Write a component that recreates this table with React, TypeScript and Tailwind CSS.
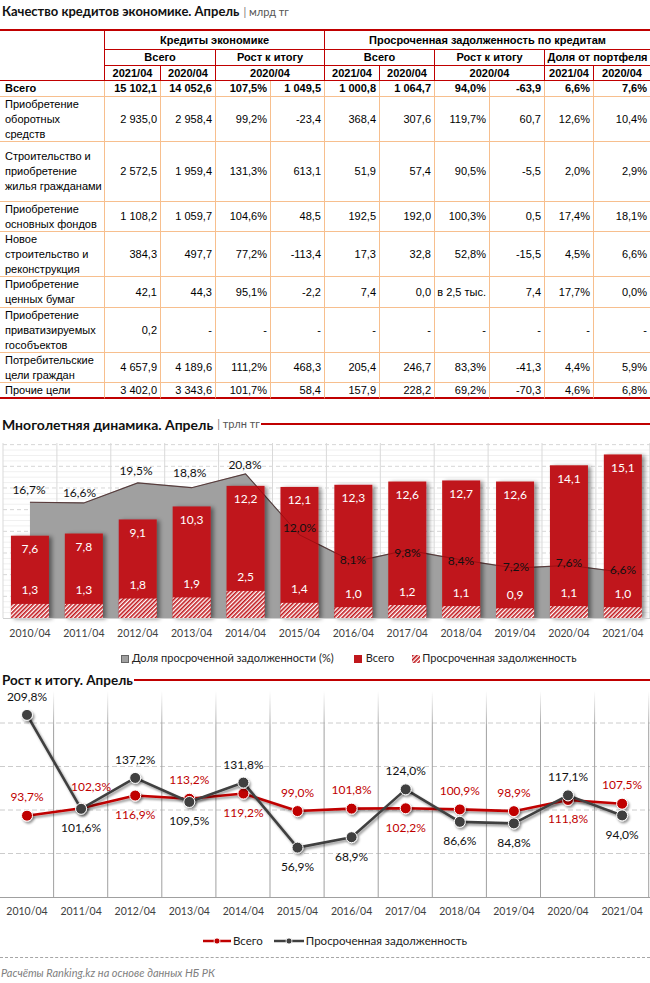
import React from "react";

const RED = "#c00000";

const years = ["2010/04","2011/04","2012/04","2013/04","2014/04","2015/04","2016/04","2017/04","2018/04","2019/04","2020/04","2021/04"];
const total = [7.6,7.8,9.1,10.3,12.2,12.1,12.3,12.6,12.7,12.6,14.1,15.1];
const overdue = [1.3,1.3,1.8,1.9,2.5,1.4,1.0,1.2,1.1,0.9,1.1,1.0];
const share = [16.7,16.6,19.5,18.8,20.8,12.0,8.1,9.8,8.4,7.2,7.6,6.6];
const shareLbl: [number, number][] = [[29,489],[79.5,492.3],[136,470.7],[189.7,472],[245,464],[299.5,527.3],[353,559.3],[407.5,552.7],[461,560],[516,566.7],[569,562.7],[623,569.3]];

const gr = [93.7,102.3,116.9,113.2,119.2,99.0,101.8,102.2,100.9,98.9,111.8,107.5];
const grPos = ["a","a","b","a","b","a","a","b","a","a","b","a"];
const od = [209.8,101.6,137.2,109.5,131.8,56.9,68.9,124.0,86.6,84.8,117.1,94.0];
const odPos = ["a","b","a","b","a","b","b","a","b","b","a","b"];

const fmt = (v: number) => v.toFixed(1).replace(".", ",");

type Row = { label: string[]; bold?: boolean; v: string[] };
const rows: Row[] = [
  { label: ["Всего"], bold: true, v: ["15 102,1","14 052,6","107,5%","1 049,5","1 000,8","1 064,7","94,0%","-63,9","6,6%","7,6%"] },
  { label: ["Приобретение","оборотных","средств"], v: ["2 935,0","2 958,4","99,2%","-23,4","368,4","307,6","119,7%","60,7","12,6%","10,4%"] },
  { label: ["Строительство и","приобретение","жилья гражданами"], v: ["2 572,5","1 959,4","131,3%","613,1","51,9","57,4","90,5%","-5,5","2,0%","2,9%"] },
  { label: ["Приобретение","основных фондов"], v: ["1 108,2","1 059,7","104,6%","48,5","192,5","192,0","100,3%","0,5","17,4%","18,1%"] },
  { label: ["Новое","строительство и","реконструкция"], v: ["384,3","497,7","77,2%","-113,4","17,3","32,8","52,8%","-15,5","4,5%","6,6%"] },
  { label: ["Приобретение","ценных бумаг"], v: ["42,1","44,3","95,1%","-2,2","7,4","0,0","в 2,5 тыс.","7,4","17,7%","0,0%"] },
  { label: ["Приобретение","приватизируемых","гособъектов"], v: ["0,2","-","-","-","-","-","-","-","-","-"] },
  { label: ["Потребительские","цели граждан"], v: ["4 657,9","4 189,6","111,2%","468,3","205,4","246,7","83,3%","-41,3","4,4%","5,9%"] },
  { label: ["Прочие цели"], v: ["3 402,0","3 343,6","101,7%","58,4","157,9","228,2","69,2%","-70,3","4,6%","6,8%"] },
];

function H({ children, cls = "" }: { children?: React.ReactNode; cls?: string }) {
  return (
    <div className={"flex items-center justify-center border-b border-r border-[#c00000] font-bold leading-none " + cls}>
      {children}
    </div>
  );
}

function Table() {
  return (
    <div className="border-t-2 border-[#c00000] font-['Liberation_Sans',Arial,sans-serif] text-[11px] text-black">
      <div className="grid grid-cols-[105px_56px_55px_55px_54px_55px_55px_55px_55px_49px_56px] grid-rows-[19px_16px_15px_16px_45px_60px_30px_45px_31px_45px_30px_16px]">
        <div className="row-span-3 border-b border-r border-[#c00000]" />
        <H cls="col-span-4">Кредиты экономике</H>
        <H cls="col-span-6 border-r-0">Просроченная задолженность по кредитам</H>
        <H cls="col-span-2">Всего</H>
        <H cls="col-span-2">Рост к итогу</H>
        <H cls="col-span-2">Всего</H>
        <H cls="col-span-2">Рост к итогу</H>
        <H cls="col-span-2 border-r-0">Доля от портфеля</H>
        <H>2021/04</H>
        <H>2020/04</H>
        <H cls="col-span-2">2020/04</H>
        <H>2021/04</H>
        <H>2020/04</H>
        <H cls="col-span-2">2020/04</H>
        <H>2021/04</H>
        <H cls="border-r-0">2020/04</H>
        {rows.map((r, ri) => {
          const last = ri === rows.length - 1;
          const bb = last ? "border-b-2 border-b-[#c00000]" : "border-b border-b-[#f7bf8e]";
          return (
            <React.Fragment key={ri}>
              <div className={"flex flex-col justify-center pl-[5px] leading-[15px] border-r border-r-[#f7bf8e] " + bb + (r.bold ? " font-bold" : "")}>
                {r.label.map((l, i) => (
                  <div key={i} className="whitespace-nowrap">{l}</div>
                ))}
              </div>
              {r.v.map((v, i) => (
                <div
                  key={i}
                  className={"flex items-center justify-end pr-[3px] leading-[15px] whitespace-nowrap " + bb + (i < 9 ? " border-r border-r-[#f7bf8e]" : "") + (r.bold ? " font-bold" : "")}
                >
                  {v}
                </div>
              ))}
            </React.Fragment>
          );
        })}
      </div>
    </div>
  );
}

function Chart1() {
  const yb = 181;
  const ux = 10.83;
  const up = 6.93;
  const cx = (i: number) => 29.95 + 53.9 * i;
  const pts = share.map((p, i) => [cx(i), yb - p * up]);
  const areaD =
    `M${cx(0)},${yb} ` + pts.map((p) => `L${p[0]},${p[1]}`).join(" ") + ` L${cx(11)},${yb} Z`;
  const lineD = pts.map((p, i) => `${i ? "L" : "M"}${p[0]},${p[1]}`).join(" ");
  const minors: number[] = [];
  for (let m = 1; m <= 32; m++) if (m % 4) minors.push(yb - m * 5.4175);
  return (
    <svg width={650} height={208} className="block">
      <defs>
        <pattern id="hatch" width="3" height="3" patternUnits="userSpaceOnUse" patternTransform="rotate(45)">
          <rect width="3" height="3" fill="#ffffff" />
          <rect width="1.6" height="3" fill="#c0171c" />
        </pattern>
        <filter id="bs" x="-20%" y="-10%" width="150%" height="120%">
          <feDropShadow dx="3" dy="1" stdDeviation="2" floodColor="#000" floodOpacity="0.45" />
        </filter>
      </defs>
      {minors.map((y, i) => (
        <line key={i} x1={3} x2={650} y1={y} y2={y} stroke="#f0f0f0" strokeWidth={1} />
      ))}
      {[1,2,3,4,5,6,7,8].map((k) => (
        <line key={k} x1={3} x2={650} y1={yb - k * 21.67} y2={yb - k * 21.67} stroke="#d6d6d6" strokeDasharray="4 3" strokeWidth={1} />
      ))}
      {Array.from({ length: 13 }).map((_, i) => (
        <line key={i} x1={3 + 53.9 * i} x2={3 + 53.9 * i} y1={6} y2={yb} stroke="#d9d9d9" strokeWidth={1} />
      ))}
      <path d={areaD} fill="#a0a0a0" />
      <path d={lineD} fill="none" stroke="#5a5a5a" strokeWidth={1.2} />
      {total.map((v, i) => (
        <rect key={i} x={cx(i) - 19} y={yb - v * ux} width={38} height={v * ux} fill="#c0171c" filter="url(#bs)" />
      ))}
      {overdue.map((v, i) => (
        <rect key={i} x={cx(i) - 19} y={yb - v * ux} width={38} height={v * ux} fill="url(#hatch)" />
      ))}
      <path d={lineD} fill="none" stroke="#5a0000" strokeOpacity={0.35} strokeWidth={1} />
      <line x1={3} x2={650} y1={yb + 0.5} y2={yb + 0.5} stroke="#d0d0d0" />
      {total.map((v, i) => (
        <text key={i} x={cx(i)} y={yb - v * ux + 13} fill="#fff" fontSize={12} textAnchor="middle" dominantBaseline="central">
          {fmt(v)}
        </text>
      ))}
      {overdue.map((v, i) => (
        <text key={i} x={cx(i)} y={yb - v * ux - 14} fill="#fff" fontSize={12} textAnchor="middle" dominantBaseline="central">
          {fmt(v)}
        </text>
      ))}
      {share.map((v, i) => (
        <text key={i} x={shareLbl[i][0]} y={shareLbl[i][1] - 437} fill="#111" fontSize={12} textAnchor="middle" dominantBaseline="central">
          {fmt(v)}%
        </text>
      ))}
      {years.map((y, i) => (
        <text key={i} x={cx(i)} y={196} fill="#404040" fontSize={10.5} textAnchor="middle" dominantBaseline="central">
          {y}
        </text>
      ))}
    </svg>
  );
}

function Chart2() {
  const yb = 209;
  const s = 0.868;
  const cx = (i: number) => 27 + 54.1 * i;
  const Y = (v: number) => yb - v * s;
  const grD = gr.map((v, i) => `${i ? "L" : "M"}${cx(i)},${Y(v)}`).join(" ");
  const odD = od.map((v, i) => `${i ? "L" : "M"}${cx(i)},${Y(v)}`).join(" ");
  return (
    <svg width={650} height={237} className="block">
      <defs>
        <linearGradient id="vfade" gradientUnits="userSpaceOnUse" x1="0" y1="3" x2="0" y2="40">
          <stop offset="0" stopColor="#a0a0a0" stopOpacity="0" />
          <stop offset="1" stopColor="#a0a0a0" stopOpacity="1" />
        </linearGradient>
        <filter id="ms" x="-50%" y="-50%" width="200%" height="200%">
          <feDropShadow dx="1.5" dy="2" stdDeviation="1.2" floodColor="#000" floodOpacity="0.4" />
        </filter>
      </defs>
      {[35, 78.5, 122, 165.5].map((y) => (
        <line key={y} x1={0} x2={650} y1={y} y2={y} stroke="#cccccc" strokeDasharray="5 3" strokeWidth={1} />
      ))}
      {Array.from({ length: 12 }).map((_, i) => (
        <rect key={i} x={53.6 + 54.1 * i - 0.5} y={3} width={1} height={yb - 3} fill="url(#vfade)" />
      ))}
      <line x1={0} x2={650} y1={yb + 0.5} y2={yb + 0.5} stroke="#a0a0a0" />
      <path d={grD} fill="none" stroke={RED} strokeWidth={2.6} filter="url(#ms)" strokeLinejoin="round" />
      {gr.map((v, i) => (
        <circle key={i} cx={cx(i)} cy={Y(v)} r={5.5} fill={RED} stroke="#fff" strokeWidth={1} filter="url(#ms)" />
      ))}
      <path d={odD} fill="none" stroke="#404040" strokeWidth={2.6} filter="url(#ms)" strokeLinejoin="round" />
      {od.map((v, i) => (
        <circle key={i} cx={cx(i)} cy={Y(v)} r={5.5} fill="#404040" stroke="#fff" strokeWidth={1} filter="url(#ms)" />
      ))}
      {gr.map((v, i) => {
        const above = grPos[i] === "a";
        const dx = i === 1 ? 10 : 0;
        const dy = i === 1 ? -22 : above ? -19 : 19;
        return (
          <text key={i} x={cx(i) + dx} y={Y(v) + dy} fill={RED} fontSize={12} textAnchor="middle" dominantBaseline="central">
            {fmt(v)}%
          </text>
        );
      })}
      {od.map((v, i) => {
        const above = odPos[i] === "a";
        return (
          <text key={i} x={cx(i)} y={Y(v) + (above ? -18.5 : 19)} fill="#111" fontSize={12} textAnchor="middle" dominantBaseline="central">
            {fmt(v)}%
          </text>
        );
      })}
      {years.map((y, i) => (
        <text key={i} x={cx(i)} y={223} fill="#404040" fontSize={10.5} textAnchor="middle" dominantBaseline="central">
          {y}
        </text>
      ))}
    </svg>
  );
}

function Title({ text, unit, line, size = "text-[13px]" }: { text: string; unit?: string; line?: boolean; size?: string }) {
  return (
    <div className="flex items-center h-[16px]">
      <span className={"font-bold text-[#111] pl-[2px] whitespace-nowrap " + size}>{text}</span>
      {unit && (
        <span className="text-[11px] text-[#555] ml-[4px] whitespace-nowrap">
          <span className="text-[#777]">|</span> {unit}
        </span>
      )}
      {line && <div className="flex-1 h-[2px] bg-[#c00000] ml-[1px]" />}
    </div>
  );
}

export default function App() {
  return (
    <div className="w-[650px] h-[983px] bg-white overflow-hidden font-['Lato','Liberation_Sans',sans-serif]">
      <div className="h-[29px] pt-[4px]">
        <Title text="Качество кредитов экономике. Апрель" unit="млрд тг" />
      </div>
      <Table />
      <div className="h-[38px] pt-[17px]">
        <Title text="Многолетняя динамика. Апрель" unit="трлн тг" line size="text-[14px]" />
      </div>
      <Chart1 />
      <div className="h-[27px] flex items-center text-[11px] text-[#222] pl-[121px]">
        <span className="w-[8px] h-[8px] bg-[#a0a0a0] border border-[#666] mr-[3px]" />
        <span>Доля просроченной задолженности (%)</span>
        <span className="w-[8px] h-[8px] bg-[#c0171c] ml-[20px] mr-[4px]" />
        <span>Всего</span>
        <svg width="8" height="8" className="ml-[18px] mr-[2px]">
          <defs>
            <pattern id="hatchL" width="3" height="3" patternUnits="userSpaceOnUse" patternTransform="rotate(45)">
              <rect width="3" height="3" fill="#fff" />
              <rect width="1.6" height="3" fill="#c0171c" />
            </pattern>
          </defs>
          <rect width="8" height="8" fill="url(#hatchL)" />
        </svg>
        <span>Просроченная задолженность</span>
      </div>
      <Title text="Рост к итогу. Апрель" line size="text-[13.5px]" />
      <Chart2 />
      <div className="h-[32px] flex items-center justify-center text-[11.5px] text-[#222] pl-[20px]">
        <svg width="28" height="8" className="mr-[2px]">
          <line x1="0" x2="28" y1="4" y2="4" stroke={RED} strokeWidth="2.5" />
          <circle cx="14" cy="4" r="3" fill={RED} stroke="#fff" strokeWidth="0.8" />
        </svg>
        <span>Всего</span>
        <svg width="30" height="8" className="ml-[11px] mr-[2px]">
          <line x1="0" x2="30" y1="4" y2="4" stroke="#404040" strokeWidth="2.5" />
          <circle cx="15" cy="4" r="3" fill="#404040" stroke="#fff" strokeWidth="0.8" />
        </svg>
        <span>Просроченная задолженность</span>
      </div>
      <div className="border-t border-dashed border-[#a6a6a6] pt-[8px] pl-[1px] text-[11px] italic text-[#7f7f7f] leading-[14px]">
        Расчёты Ranking.kz на основе данных НБ РК
      </div>
    </div>
  );
}
